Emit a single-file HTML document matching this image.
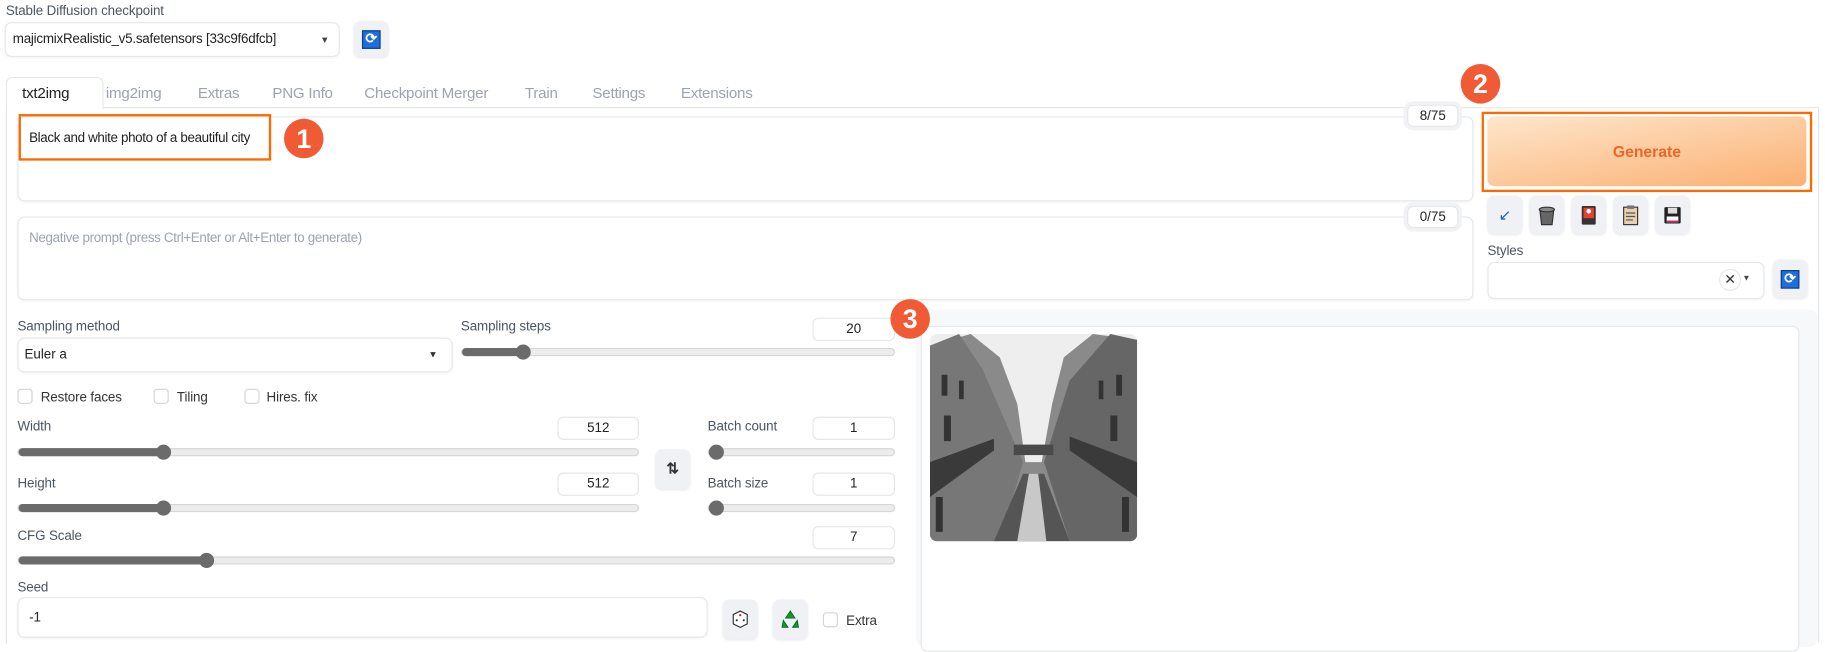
<!DOCTYPE html>
<html><head><meta charset="utf-8">
<style>
*{box-sizing:border-box;margin:0;padding:0}
html,body{width:1825px;height:643px;overflow:hidden;background:#fff;font-family:"Liberation Sans",sans-serif;}
#s{position:absolute;left:0;top:0;width:1568px;height:552px;transform:scale(1.16390);transform-origin:0 0;}
.a{position:absolute}
.lbl{position:absolute;font-size:11.5px;color:#4b5563;letter-spacing:-0.1px;margin-top:2px}
.box{position:absolute;background:#fff;border:1px solid #e5e7eb;border-radius:6px;box-shadow:0 1px 2px rgba(0,0,0,.04);}
.tab{position:absolute;top:72px;font-size:13px;color:#9ca3af;letter-spacing:-0.2px}
.btn{position:absolute;background:#f0f1f4;border-radius:6px;box-shadow:0 1px 2px rgba(0,0,0,.08);display:flex;align-items:center;justify-content:center;}
.num{position:absolute;background:#fff;border:1px solid #e5e7eb;border-radius:5px;font-size:11.5px;color:#222;text-align:center;line-height:19px;}
.track{position:absolute;height:7px;border-radius:4px;background:#ececec;border:1px solid #d5d5d5;}
.fill{position:absolute;left:0;top:-1px;height:7px;border-radius:4px;background:#6b6b6b;}
.thumb{position:absolute;top:-4.5px;width:13px;height:13px;border-radius:50%;background:#6b6b6b;}
.cb{position:absolute;width:13px;height:13px;border:1px solid #d1d5db;border-radius:3px;background:#fff;}
.circ{position:absolute;width:34px;height:34px;border-radius:50%;background:#f05a35;color:#fff;font-size:23px;font-weight:bold;text-align:center;line-height:34px;}
.ref{width:16px;height:16px;background:#1e6fd9;border:1.5px solid #0d3f8a;color:#fff;font-size:12px;line-height:13px;text-align:center;font-weight:bold}
</style></head><body>
<div id="s">
<div class="lbl" style="left:5px;top:2px;">Stable Diffusion checkpoint</div>
<div class="box" style="left:4px;top:19px;width:288px;height:30px;"></div>
<div class="a" style="left:11px;top:28px;font-size:11.5px;color:#222;letter-spacing:-0.2px">majicmixRealistic_v5.safetensors [33c9f6dfcb]</div>
<div class="a" style="left:275px;top:30px;font-size:8px;color:#444;">▼</div>
<div class="btn" style="left:304px;top:18px;width:30px;height:31px;"><div class="ref">⟳</div></div>

<div class="a" style="left:5px;top:66px;width:84px;height:28px;background:#fff;border:1px solid #e5e7eb;border-bottom:none;border-radius:6px 6px 0 0;z-index:2"></div>
<div class="a" style="left:88px;top:92px;width:1475px;height:1px;background:#e5e7eb"></div>
<div class="a" style="left:5px;top:93px;width:1px;height:460px;background:#e5e7eb"></div>
<div class="a" style="left:1562px;top:92px;width:1px;height:460px;background:#e5e7eb"></div>
<div class="tab" style="left:19px;color:#222;z-index:3">txt2img</div>
<div class="tab" style="left:91px">img2img</div>
<div class="tab" style="left:170px">Extras</div>
<div class="tab" style="left:234px">PNG Info</div>
<div class="tab" style="left:313px">Checkpoint Merger</div>
<div class="tab" style="left:451px">Train</div>
<div class="tab" style="left:509px">Settings</div>
<div class="tab" style="left:585px">Extensions</div>

<div class="box" style="left:15px;top:100px;width:1251px;height:73px;"></div>
<div class="a" style="left:16px;top:98px;width:217px;height:40px;border:2px solid #ff6a00;"></div>
<div class="a" style="left:25px;top:113px;font-size:11.5px;color:#222;letter-spacing:-0.3px">Black and white photo of a beautiful city</div>
<div class="circ" style="left:244px;top:102px;">1</div>
<div class="num" style="left:1209px;top:90px;width:44px;height:19px;box-shadow:0 0 0 3px #f1f2f4;">8/75</div>

<div class="box" style="left:15px;top:186px;width:1251px;height:72px;"></div>
<div class="a" style="left:25px;top:199px;font-size:11.5px;color:#9ca3af;letter-spacing:-0.3px">Negative prompt (press Ctrl+Enter or Alt+Enter to generate)</div>
<div class="num" style="left:1209px;top:177px;width:44px;height:19px;box-shadow:0 0 0 3px #f1f2f4;">0/75</div>

<div class="circ" style="left:1255px;top:55px;">2</div>
<div class="a" style="left:1273px;top:96px;width:284px;height:69px;border:2px solid #ff6a00;"></div>
<div class="a" style="left:1278px;top:100px;width:274px;height:60px;border-radius:6px;background:linear-gradient(170deg,#fee6cc,#fbb072);color:#ef6525;font-size:13.5px;font-weight:bold;text-align:center;line-height:62px;">Generate</div>
<div class="btn" style="left:1278px;top:168px;width:30px;height:33px;font-size:13px;color:#1f5fb0">↙</div>
<div class="btn" style="left:1314px;top:168px;width:30px;height:33px;"><svg width="16" height="18"><path d="M2 4h12l-1.5 13h-9z" fill="#666" stroke="#333"/><ellipse cx="8" cy="4" rx="6.5" ry="2" fill="#888" stroke="#333"/></svg></div>
<div class="btn" style="left:1350px;top:168px;width:30px;height:33px;"><svg width="14" height="18"><rect x="1" y="1" width="12" height="16" rx="1" fill="#333"/><rect x="2.5" y="2.5" width="9" height="9" fill="#e8402a"/><circle cx="7" cy="5.5" r="2" fill="#fff"/></svg></div>
<div class="btn" style="left:1386px;top:168px;width:30px;height:33px;"><svg width="14" height="18"><rect x="1" y="2" width="12" height="15" fill="#e8d0b0" stroke="#333"/><rect x="4" y="0.5" width="6" height="3" fill="#777"/><path d="M3 7h8M3 10h8M3 13h6" stroke="#555"/></svg></div>
<div class="btn" style="left:1422px;top:168px;width:30px;height:33px;"><svg width="16" height="16"><rect x="1" y="1" width="14" height="14" rx="1" fill="#222"/><rect x="4" y="1.5" width="8" height="5" fill="#ddd"/><rect x="3" y="9" width="10" height="5" fill="#fff"/><rect x="3" y="12.5" width="10" height="1.5" fill="#d0206a"/></svg></div>
<div class="lbl" style="left:1278px;top:208px;">Styles</div>
<div class="box" style="left:1278px;top:225px;width:238px;height:32px;"></div>
<div class="a" style="left:1477px;top:231px;width:19px;height:19px;border:1px solid #e5e7eb;border-radius:50%;text-align:center;line-height:17px;font-size:12px;color:#333">✕</div>
<div class="a" style="left:1497px;top:236px;font-size:7px;color:#444">▼</div>
<div class="btn" style="left:1523px;top:223px;width:30px;height:33px;"><div class="ref">⟳</div></div>

<div class="lbl" style="left:15px;top:273px;">Sampling method</div>
<div class="box" style="left:15px;top:290px;width:374px;height:30px;"></div>
<div class="a" style="left:21px;top:299px;font-size:11.5px;color:#222">Euler a</div>
<div class="a" style="left:368px;top:300px;font-size:8px;color:#333">▼</div>
<div class="lbl" style="left:396px;top:273px;">Sampling steps</div>
<div class="num" style="left:698px;top:273px;width:71px;height:20px;">20</div>
<div class="track" style="left:396px;top:299px;width:373px;"><div class="fill" style="width:54px"></div><div class="thumb" style="left:46px"></div></div>

<div class="cb" style="left:15px;top:334px"></div><div class="lbl" style="left:35px;top:334px;color:#333">Restore faces</div>
<div class="cb" style="left:132px;top:334px"></div><div class="lbl" style="left:152px;top:334px;color:#333">Tiling</div>
<div class="cb" style="left:210px;top:334px"></div><div class="lbl" style="left:229px;top:334px;color:#333">Hires. fix</div>

<div class="lbl" style="left:15px;top:359px;">Width</div>
<div class="num" style="left:479px;top:358px;width:70px;height:20px;">512</div>
<div class="track" style="left:15px;top:385px;width:534px;"><div class="fill" style="width:128px"></div><div class="thumb" style="left:118px"></div></div>
<div class="lbl" style="left:15px;top:408px;">Height</div>
<div class="num" style="left:479px;top:406px;width:70px;height:20px;">512</div>
<div class="track" style="left:15px;top:433px;width:534px;"><div class="fill" style="width:128px"></div><div class="thumb" style="left:118px"></div></div>
<div class="btn" style="left:563px;top:386px;width:30px;height:34px;font-size:13px;color:#333;font-weight:bold">⇅</div>
<div class="lbl" style="left:608px;top:359px;">Batch count</div>
<div class="num" style="left:698px;top:358px;width:71px;height:20px;">1</div>
<div class="track" style="left:608px;top:385px;width:161px;"><div class="thumb" style="left:0px"></div></div>
<div class="lbl" style="left:608px;top:408px;">Batch size</div>
<div class="num" style="left:698px;top:406px;width:71px;height:20px;">1</div>
<div class="track" style="left:608px;top:433px;width:161px;"><div class="thumb" style="left:0px"></div></div>

<div class="lbl" style="left:15px;top:453px;">CFG Scale</div>
<div class="num" style="left:698px;top:452px;width:71px;height:20px;">7</div>
<div class="track" style="left:15px;top:478px;width:754px;"><div class="fill" style="width:165px"></div><div class="thumb" style="left:155px"></div></div>

<div class="lbl" style="left:15px;top:497px;">Seed</div>
<div class="box" style="left:15px;top:513px;width:593px;height:35px;"></div>
<div class="a" style="left:25px;top:525px;font-size:11.5px;color:#222">-1</div>
<div class="btn" style="left:621px;top:515px;width:30px;height:34px;"><svg width="16" height="16"><path d="M8 1l6 3v8l-6 3-6-3V4z" fill="#fff" stroke="#333"/><circle cx="8" cy="4.5" r="1" fill="#d22"/><circle cx="5" cy="9" r=".9" fill="#333"/><circle cx="11" cy="9" r=".9" fill="#333"/></svg></div>
<div class="btn" style="left:664px;top:515px;width:30px;height:34px;"><svg width="16" height="16"><path d="M8 1l4 6H4zM2 9l4 6H1zM14 9l1 6h-5z" fill="#1a9a1a" stroke="#063" stroke-width=".8"/></svg></div>
<div class="cb" style="left:707px;top:526px"></div><div class="lbl" style="left:727px;top:526px;color:#333">Extra</div>

<div class="a" style="left:787px;top:266px;width:775px;height:290px;background:#f7f8fa;border-radius:8px;"></div>
<div class="a" style="left:791px;top:280px;width:755px;height:280px;background:#fff;border:1px solid #e5e7eb;border-radius:6px;"></div>
<div class="circ" style="left:765px;top:257px;">3</div>
<svg class="a" style="left:799px;top:287px;border-radius:6px" width="178" height="178" viewBox="0 0 178 178">
<rect width="178" height="178" fill="#eeeeee"/>
<path d="M0 10L35 0 60 20 75 60 82 110 96 110 105 60 115 20 140 0 178 5V178H0z" fill="#8a8a8a"/>
<path d="M0 10L25 0 45 30 80 110 60 178H0z" fill="#777"/>
<path d="M178 5L155 0 120 40 98 110 120 178H178z" fill="#666"/>
<path d="M80 120L98 120 120 178H55z" fill="#555"/>
<path d="M85 120L93 120 100 178H75z" fill="#c8c8c8"/>
<rect x="72" y="95" width="34" height="9" fill="#4a4a4a"/>
<path d="M0 110L55 90 55 100 0 140z" fill="#3a3a3a"/>
<path d="M178 110L120 88 120 100 178 140z" fill="#3a3a3a"/>
<g fill="#333"><rect x="10" y="35" width="5" height="18"/><rect x="25" y="40" width="4" height="16"/><rect x="160" y="35" width="5" height="18"/><rect x="145" y="40" width="4" height="16"/><rect x="12" y="70" width="6" height="22"/><rect x="155" y="70" width="6" height="22"/><rect x="5" y="140" width="6" height="30"/><rect x="165" y="140" width="6" height="30"/></g>
</svg>
</div>
</body></html>
